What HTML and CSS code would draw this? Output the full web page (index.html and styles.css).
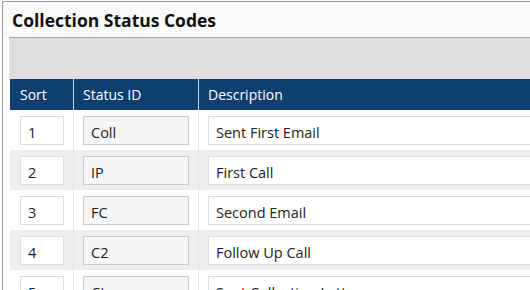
FILE: index.html
```html
<!DOCTYPE html>
<html>
<head>
<meta charset="utf-8">
<link rel="stylesheet" href="styles.css">
</head>
<body>
<div class="panel">
  <div class="title">Collection Status Codes</div>
  <div class="content">
    <div class="toolbar"></div>
    <div class="grid">
      <div class="row head">
        <div class="cell">Sort</div>
        <div class="cell">Status ID</div>
        <div class="cell">Description</div>
      </div>
      <div class="row">
        <div class="cell"><input class="in sort" value="1"></div>
        <div class="cell"><input class="in code" value="Coll" readonly></div>
        <div class="cell"><input class="in desc" value="Sent First Email"></div>
      </div>
      <div class="row alt">
        <div class="cell"><input class="in sort" value="2"></div>
        <div class="cell"><input class="in code" value="IP" readonly></div>
        <div class="cell"><input class="in desc" value="First Call"></div>
      </div>
      <div class="row">
        <div class="cell"><input class="in sort" value="3"></div>
        <div class="cell"><input class="in code" value="FC" readonly></div>
        <div class="cell"><input class="in desc" value="Second Email"></div>
      </div>
      <div class="row alt">
        <div class="cell"><input class="in sort" value="4"></div>
        <div class="cell"><input class="in code" value="C2" readonly></div>
        <div class="cell"><input class="in desc" value="Follow Up Call"></div>
      </div>
      <div class="row">
        <div class="cell"><input class="in sort" value="5"></div>
        <div class="cell"><input class="in code" value="CL" readonly></div>
        <div class="cell"><input class="in desc" value="Sent Collection Letter"></div>
      </div>
    </div>
  </div>
</div>
</body>
</html>
```
FILE: styles.css
```css
html, body {
  margin: 0;
  padding: 0;
  width: 530px;
  height: 290px;
  overflow: hidden;
  background: #ffffff;
  font-family: "Open Sans", "Noto Sans", sans-serif;
  color: #222222;
}
.panel {
  margin: 1px 0 0 2px;
  border-left: 1px solid #9a9a9a;
  border-top: 1px solid #9a9a9a;
  height: 288px;
  overflow: hidden;
}
.title {
  background: #f9f9f9;
  height: 35px;
  padding-left: 9px;
  font-size: 17.5px;
  font-weight: 700;
  line-height: 37px;
  color: #111111;
}
.content {
  padding-left: 6px;
}
.toolbar {
  border-top: 1px solid #a8a8a8;
  height: 41px;
  background: #dedede;
}
.grid {
  margin-left: 1px;
}
.row {
  display: grid;
  grid-template-columns: 64px 125px 400px;
  height: 40px;
}
.row.alt {
  background: #eeeeee;
}
.cell {
  border-right: 1px solid #e4e4e4;
  display: flex;
  align-items: center;
  padding-left: 9px;
}
.row .cell:first-child {
  padding-left: 10px;
}
.row .cell:last-child {
  border-right: none;
}
.row.head {
  background: #0e3f6f;
  height: 31px;
  color: #ffffff;
  font-size: 14px;
}
.row.head .cell {
  border-right-color: #c9d3de;
}
.row.head + .row {
  border-top: 1px solid #ffffff;
  height: 39px;
}
.in {
  box-sizing: border-box;
  height: 29px;
  border: 1px solid #dcdcdc;
  background: #ffffff;
  font-family: "Open Sans", "Noto Sans", sans-serif;
  font-size: 14.5px;
  color: #222222;
  padding: 4px 0 0 7px;
  margin: 0;
  outline: none;
}
.in.sort {
  width: 44px;
}
.in.code {
  width: 106px;
  background: #f4f5f6;
  border-color: #c8c8c8;
}
.in.desc {
  width: 400px;
}
```
